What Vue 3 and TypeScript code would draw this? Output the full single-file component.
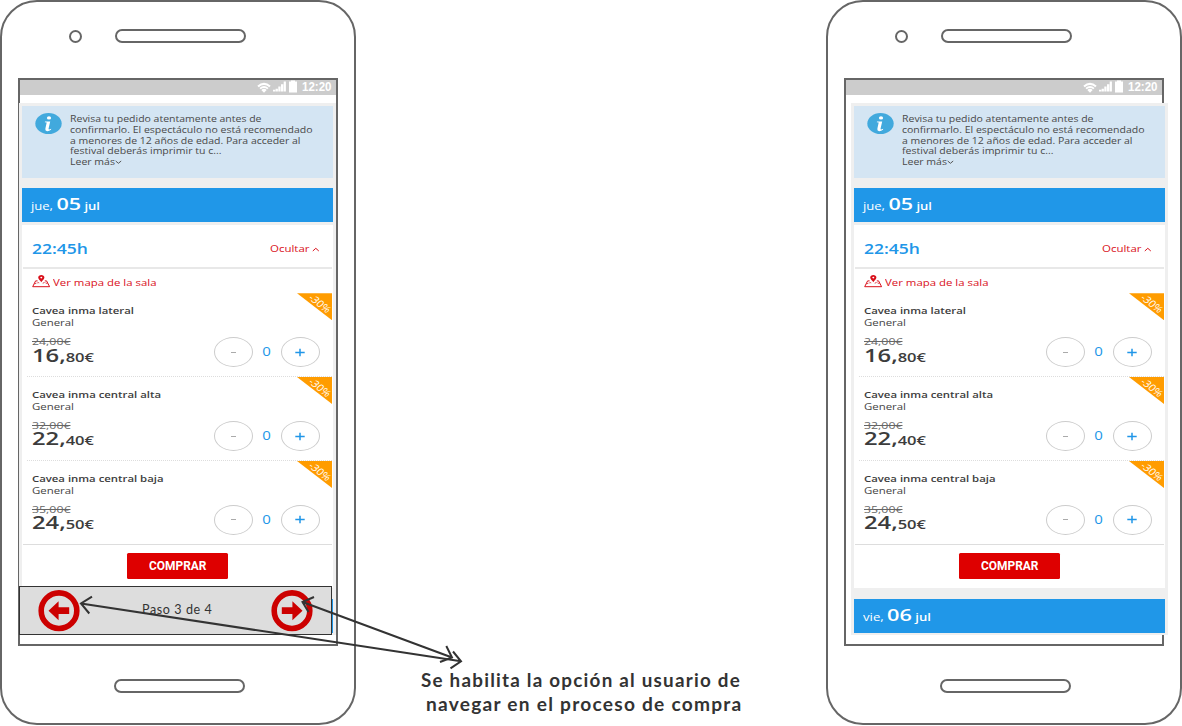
<script setup lang="ts">
interface Ticket {
  name: string
  old: string
  whole: string
  cents: string
  width: number
}

interface Phone {
  id: string
  wizard: boolean
}

const phones: Phone[] = [
  { id: 'left', wizard: true },
  { id: 'right', wizard: false },
]

const notice: { text: string; width: number }[] = [
  { text: 'Revisa tu pedido atentamente antes de', width: 191.5 },
  { text: 'confirmarlo. El espectáculo no está recomendado', width: 242.5 },
  { text: 'a menores de 12 años de edad. Para acceder al', width: 230.5 },
  { text: 'festival deberás imprimir tu c...', width: 151.5 },
]

const tickets: Ticket[] = [
  { name: 'Cavea inma lateral', old: '24,00€', whole: '16,', cents: '80€', width: 102 },
  { name: 'Cavea inma central alta', old: '32,00€', whole: '22,', cents: '40€', width: 129 },
  { name: 'Cavea inma central baja', old: '35,00€', whole: '24,', cents: '50€', width: 131.5 },
]

// Stretches a line of text horizontally to the given width in pixels.
const vStretch = {
  mounted(el: HTMLElement, binding: { value: number }) {
    const natural = el.getBoundingClientRect().width
    if (natural > 0) el.style.transform = `scaleX(${binding.value / natural})`
  },
}
</script>

<template>
  <main class="board">
    <section v-for="phone in phones" :key="phone.id" class="phone" :class="phone.id">
      <header class="phone-top">
        <span class="camera"></span>
        <span class="pill"></span>
      </header>

      <div class="screen">
        <div class="status">
          <svg class="wifi" width="14" height="11" viewBox="0 0 14 11">
            <path d="M0.3 3.8Q7 -2.2 13.7 3.8L12.3 5.2Q7 0.7 1.7 5.2Z" />
            <path d="M2.4 5.9Q7 2 11.6 5.9L10.3 7.3Q7 4.6 3.7 7.3Z" />
            <path d="M4.3 7.9Q7 5.6 9.7 7.9L7 10.7Z" />
          </svg>
          <svg class="signal" width="13" height="11" viewBox="0 0 13 11">
            <path d="M0 8.7h2.3v1.8h-2.3zM2.6 7.7h2.3v2.8h-2.3zM5.3 5.5h2.3v5h-2.3zM8 3.3h2.3v7.2h-2.3zM10.7 0.5h2.2v10h-2.2z" />
          </svg>
          <svg class="battery" width="8" height="13" viewBox="0 0 8 13">
            <path d="M2 0.5h4v1h2v11h-8v-11h2z" />
          </svg>
          <span class="clock"><span v-stretch="29.5" class="st">12:20</span></span>
        </div>

        <div class="panel">
          <div class="notice">
            <svg class="info" width="27" height="22" viewBox="0 0 27 22">
              <ellipse cx="13.5" cy="10.6" rx="13.2" ry="10.5" fill="#41a9dd" />
              <ellipse cx="14" cy="4.9" rx="2.1" ry="1.7" fill="#fff" />
              <path d="M10 8.4H15.2L13.6 15.4Q13.3 16.5 14.2 16.4L16.2 15.7L16 16.8Q13.8 18.4 11.6 18.1Q9.9 17.7 10.4 15.4L11.7 9.6L9.8 9.2Z" fill="#fff" />
            </svg>
            <div class="notice-text">
              <div v-for="line in notice" :key="line.text" class="line">
                <span v-stretch="line.width" class="st">{{ line.text }}</span>
              </div>
              <div class="line more">
                <span class="more-label"><span v-stretch="45" class="st">Leer más</span></span>
                <svg width="7" height="5" viewBox="0 0 7 5"><path d="M0.7 1L3.4 3.3L6.2 1" fill="none" stroke="#555" stroke-width="1" /></svg>
              </div>
            </div>
          </div>

          <div class="day">
            <span v-stretch="69" class="st">jue, <b class="num">05</b> <b>jul</b></span>
          </div>

          <div class="card">
            <div class="session">
              <span class="hour"><span v-stretch="56" class="st">22:45h</span></span>
              <span class="hide"><span v-stretch="39.5" class="st">Ocultar</span></span>
              <svg width="8" height="5" viewBox="0 0 8 5"><path d="M0.8 4L3.8 1.3L6.8 4" fill="none" stroke="#d9101b" stroke-width="1" /></svg>
            </div>

            <div class="map">
              <svg width="19" height="13" viewBox="0 0 19 13">
                <path d="M5.6 5.9H3.6L0.7 11.7H17.6L14.6 5.9H12.8" fill="none" stroke="#d9101b" stroke-width="1" />
                <path d="M2.5 8.9L6.2 7.6L8 8.2M10.7 8.2L12.6 7.5L16.3 9" fill="none" stroke="#d9101b" stroke-width="0.8" stroke-dasharray="2 1" />
                <path fill-rule="evenodd" d="M9.3 7.2C8.5 5.7 6.2 4.3 6.2 2.6C6.2 1 7.6 0.1 9.3 0.1C11 0.1 12.4 1 12.4 2.6C12.4 4.3 10.1 5.7 9.3 7.2ZM9.3 1.8A1 0.8 0 1 0 9.3 3.4A1 0.8 0 1 0 9.3 1.8Z" fill="#d9101b" />
              </svg>
              <span v-stretch="103.5" class="st">Ver mapa de la sala</span>
            </div>

            <article v-for="t in tickets" :key="t.name" class="ticket">
              <div class="details">
                <div class="name"><span v-stretch="t.width" class="st">{{ t.name }}</span></div>
                <div class="zone"><span v-stretch="42" class="st">General</span></div>
                <div class="old"><span v-stretch="38.5" class="st">{{ t.old }}</span></div>
                <div class="price"><span v-stretch="62" class="st">{{ t.whole }}<small>{{ t.cents }}</small></span></div>
              </div>
              <div class="stepper">
                <span class="round minus"><i></i></span>
                <span class="count"><span>0</span></span>
                <span class="round plus">
                  <svg width="10" height="9" viewBox="0 0 10 9"><path d="M0.3 4.5H9.7M5 0.7V8.3" stroke="#2196e8" stroke-width="1.5" /></svg>
                </span>
              </div>
              <div class="ribbon"><span>-30%</span></div>
            </article>

            <div class="buy-row">
              <button class="buy"><span v-stretch="57.5" class="st">COMPRAR</span></button>
            </div>
          </div>

          <div class="day next">
            <span v-stretch="68" class="st">vie, <b class="num">06</b> <b>jul</b></span>
          </div>
        </div>
      </div>

      <span class="pill home"></span>

      <nav v-if="phone.wizard" class="wizard">
        <svg width="42" height="42" viewBox="0 0 42 42">
          <circle cx="21" cy="20.7" r="17.8" fill="none" stroke="#c00" stroke-width="5.6" />
          <path d="M10.5 20.7L20.6 11.3V17.3H31.2V23.9H20.6V30.2Z" fill="#c00" />
        </svg>
        <span class="step"><span v-stretch="70.5" class="st">Paso 3 de 4</span></span>
        <svg width="42" height="42" viewBox="0 0 42 42">
          <circle cx="21" cy="20.7" r="17.8" fill="none" stroke="#c00" stroke-width="5.6" />
          <path d="M31.5 20.7L21.4 11.3V17.3H10.8V23.9H21.4V30.2Z" fill="#c00" />
        </svg>
      </nav>
    </section>

    <svg class="arrows" width="400" height="80" viewBox="70 592 400 80">
      <g fill="none" stroke="#333" stroke-width="2">
        <path d="M81 603.5L461 661.3M92 596.7L81 603.5L89.3 613.5M453 651.5L461 661.3L450.5 668.3" />
        <path d="M302.5 602L452 657.5M314 597L302.5 602L308.5 612M446.3 646L452 657.5L440 662" />
      </g>
    </svg>

    <aside class="caption">
      <div><span v-stretch="320" class="st">Se habilita la opción al usuario de</span></div>
      <div class="second"><span v-stretch="316.5" class="st">navegar en el proceso de compra</span></div>
    </aside>
  </main>
</template>

<style>
body {
  margin: 0;
  background: #fff;
}
</style>

<style scoped>
.board {
  position: relative;
  display: flex;
  justify-content: space-between;
  width: 1182px;
  height: 726px;
  overflow: hidden;
  font-family: 'Open Sans', 'Noto Sans', sans-serif;
  color: #444;
}
.board * {
  box-sizing: border-box;
}
.st {
  display: inline-block;
  white-space: nowrap;
  transform-origin: 0 50%;
}
svg {
  display: block;
  flex: none;
}
.phone {
  position: relative;
  display: flex;
  flex-direction: column;
  width: 356px;
  height: 725px;
  border: 2px solid #666;
  border-radius: 37px;
  background: #fff;
}
.phone-top {
  display: flex;
  align-items: flex-start;
  gap: 33px;
  height: 76px;
  padding: 27px 0 0 66.6px;
}
.camera {
  width: 13px;
  height: 13px;
  margin-top: 1.2px;
  border: 2px solid #666;
  border-radius: 50%;
}
.pill {
  width: 131px;
  height: 13.5px;
  border: 2px solid #666;
  border-radius: 7px;
}
.home {
  margin: 33px 0 0 111.6px;
}
.screen {
  width: 320px;
  height: 568px;
  margin-left: 16px;
  border: 2px solid #666;
}
.status {
  display: flex;
  height: 15px;
  padding-left: 237px;
  background: #ccc;
}
.status svg {
  fill: #fff;
}
.wifi {
  margin-top: 2px;
}
.signal {
  margin: 1px 0 0 1.5px;
}
.battery {
  margin: 0 0 0 3.5px;
}
.clock {
  margin-left: 4.5px;
  font: 700 12px/15px 'Liberation Sans', sans-serif;
  color: #fff;
}
.panel {
  position: relative;
  width: 317px;
  height: 532px;
  margin: 8px 0 0 -1px;
  padding: 3px;
  background: #efefef;
}
.right .panel {
  margin-left: 5px;
}
.notice {
  display: flex;
  height: 72px;
  padding: 6.7px 0 0 13px;
  background: #d4e5f3;
}
.notice-text {
  margin: 1.3px 0 0 8.4px;
  font-size: 8.8px;
  color: #4a4a4a;
}
.line {
  height: 10.8px;
  line-height: 10.8px;
}
.more {
  display: flex;
  align-items: center;
}
.more-label {
  width: 45px;
}
.day {
  height: 34px;
  margin-top: 10px;
  padding-left: 9px;
  font-size: 10px;
  line-height: 31px;
  color: #fff;
  background: #2097e8;
}
.day b {
  font-weight: 600;
}
.day .num {
  font-size: 16.5px;
}
.card {
  height: 363px;
  margin-top: 3px;
  background: #fff;
}
.session {
  display: flex;
  align-items: center;
  height: 44px;
  margin: 0 1px;
  padding: 6px 0 0 8.5px;
  border-bottom: 2px solid #e8e8e8;
}
.hour {
  width: 238px;
  font-size: 14.5px;
  font-weight: 600;
  line-height: 16px;
  color: #2196e8;
}
.hide {
  width: 42px;
  font-size: 9px;
  line-height: 16px;
  color: #d9101b;
}
.map {
  display: flex;
  gap: 2.5px;
  height: 24.3px;
  padding: 6px 0 0 9.5px;
  font-size: 9.3px;
  line-height: 16px;
  color: #d9101b;
}
.ticket {
  position: relative;
  display: flex;
  justify-content: space-between;
  height: 83.8px;
  margin: 0 1px;
  padding: 0 12.4px 0 9px;
}
.ticket::after {
  content: '';
  position: absolute;
  left: 4px;
  right: 0;
  bottom: 0;
  border-bottom: 1px dotted #ddd;
}
.ticket:nth-of-type(3)::after {
  left: 0;
  bottom: -0.5px;
  border-bottom: 1px solid #ddd;
}
.details {
  padding-top: 11px;
}
.name {
  height: 13px;
  font-size: 9.2px;
  font-weight: 600;
  line-height: 13px;
  color: #3c3c3c;
}
.zone {
  height: 12px;
  font-size: 9px;
  line-height: 12px;
}
.old {
  height: 12px;
  margin-top: 7.2px;
  font-size: 9px;
  line-height: 12px;
  color: #666;
  text-decoration: line-through;
}
.old .st {
  text-decoration: line-through;
}
.price {
  height: 18px;
  margin-top: -2.8px;
  font-size: 18px;
  font-weight: 600;
  line-height: 18px;
  color: #3c3c3c;
}
.price small {
  font-size: 12.5px;
}
.stepper {
  display: flex;
  align-items: center;
  height: 30px;
  margin-top: 44px;
}
.round {
  display: flex;
  align-items: center;
  justify-content: center;
  width: 39px;
  height: 30px;
  border: 1px solid #ccc;
  border-radius: 50%;
}
.minus i {
  width: 5px;
  height: 1px;
  background: #aaa;
}
.count {
  width: 28px;
  font-size: 12px;
  line-height: 30px;
  text-align: center;
  color: #2196e8;
}
.count span {
  display: inline-block;
  transform: scaleX(1.25);
}
.ribbon {
  position: absolute;
  top: 0;
  right: 0;
  width: 35px;
  height: 27px;
  background: #ff9c00;
  clip-path: polygon(0 0, 100% 0, 100% 100%);
}
.ribbon span {
  position: absolute;
  left: 10px;
  top: 3.7px;
  width: 26px;
  font-size: 10px;
  line-height: 13px;
  text-align: center;
  color: #fff;
  transform: rotate(38deg) skewX(-10deg) scaleX(1.06);
}
.buy-row {
  display: flex;
  padding: 8.2px 0 0 105px;
}
.buy {
  width: 101px;
  height: 26px;
  padding: 0 0 0 22px;
  border: 0;
  border-radius: 1.5px;
  font: 700 13.2px/26px Roboto, sans-serif;
  text-align: left;
  color: #fff;
  background: #de0000;
}
.next {
  margin-top: 11px;
}
.wizard {
  position: absolute;
  left: 17px;
  top: 584px;
  display: flex;
  align-items: center;
  width: 313px;
  height: 49px;
  padding-left: 18px;
  border: 1px solid #333;
  background: #ddd;
}
.step {
  width: 130px;
  margin: -1px 0 0 62px;
  font: 400 12.5px/16px Lato, sans-serif;
  letter-spacing: 0.6px;
  color: #333;
}
.wizard svg:last-child {
  margin-left: -1px;
}
.arrows {
  position: absolute;
  left: 70px;
  top: 592px;
}
.caption {
  position: absolute;
  left: 421px;
  top: 668px;
  font: 700 18.5px/24px Lato, sans-serif;
  letter-spacing: 1.2px;
  color: #333;
}
.second {
  padding-left: 5px;
}
</style>
